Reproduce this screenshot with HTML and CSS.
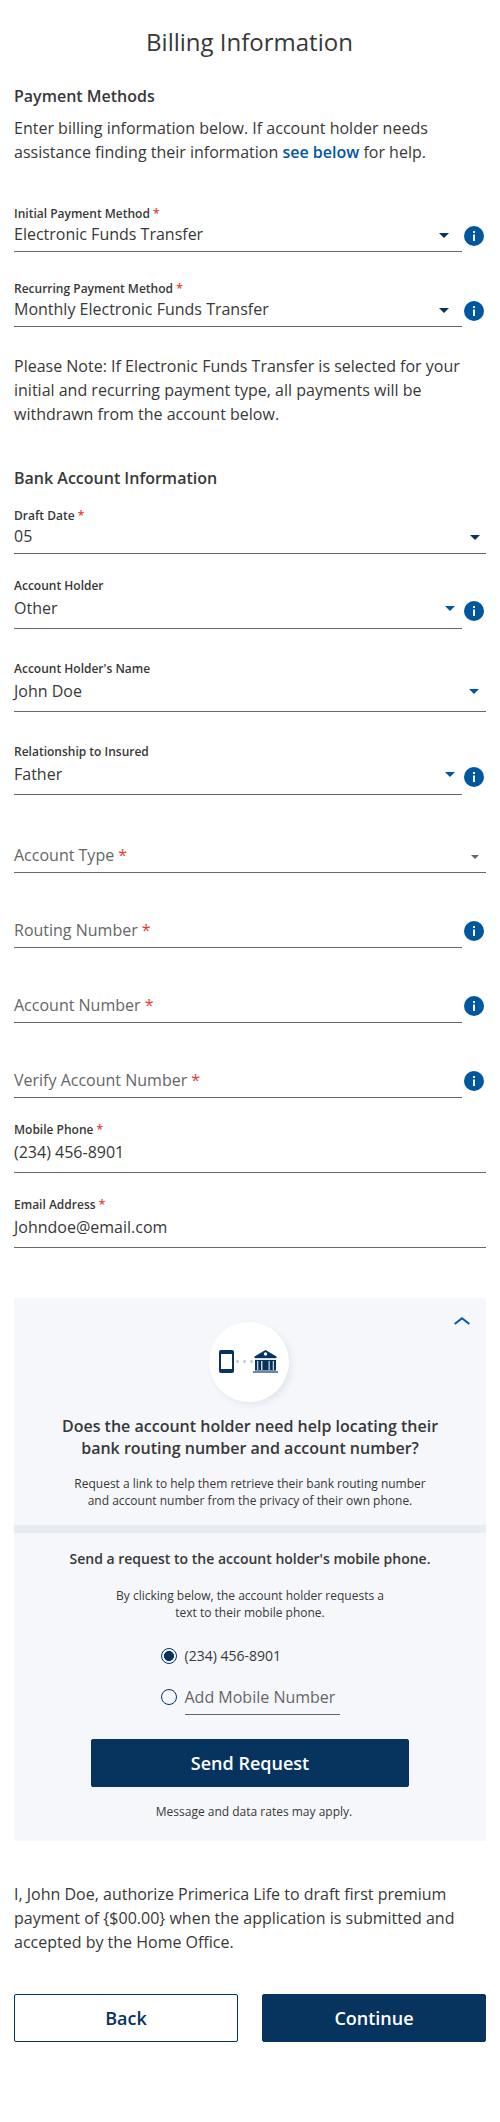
FILE: index.html
```html
<!DOCTYPE html>
<html lang="en">
<head>
<meta charset="utf-8">
<title>Billing Information</title>
<link rel="stylesheet" href="styles.css">
</head>
<body>
<svg class="defs" width="0" height="0">
  <symbol id="info" viewBox="0 0 20 20"><circle cx="10" cy="10" r="10" fill="#0057a0"/><path fill="#fff" d="M9 5h2v2H9zM9 8.5h2V15H9z"/></symbol>
  <symbol id="caret" viewBox="0 0 10 5"><path fill="currentColor" d="M0 0h10L5 5z"/></symbol>
</svg>
<main class="page">
  <h1 class="title">Billing Information</h1>
  <h2 class="section">Payment Methods</h2>
  <p class="copy intro">Enter billing information below. If account holder needs assistance finding their information <a class="link">see below</a> for help.</p>

  <div class="row first">
    <div class="field"><span class="label">Initial Payment Method <b class="req">*</b></span>
      <div class="value">Electronic Funds Transfer<svg class="caret navy inset"><use href="#caret"/></svg></div></div>
    <svg class="info"><use href="#info"/></svg>
  </div>
  <div class="row second">
    <div class="field"><span class="label">Recurring Payment Method <b class="req">*</b></span>
      <div class="value">Monthly Electronic Funds Transfer<svg class="caret navy inset"><use href="#caret"/></svg></div></div>
    <svg class="info"><use href="#info"/></svg>
  </div>
  <p class="copy note">Please Note: If Electronic Funds Transfer is selected for your initial and recurring payment type, all payments will be withdrawn from the account below.</p>

  <h2 class="section bank">Bank Account Information</h2>
  <div class="row draft">
    <div class="field"><span class="label">Draft Date <b class="req">*</b></span>
      <div class="value">05<svg class="caret navy"><use href="#caret"/></svg></div></div>
  </div>
  <div class="row near">
    <div class="field roomy"><span class="label">Account Holder</span>
      <div class="value">Other<svg class="caret"><use href="#caret"/></svg></div></div>
    <svg class="info low"><use href="#info"/></svg>
  </div>
  <div class="row apart">
    <div class="field roomy"><span class="label">Account Holder's Name</span>
      <div class="value">John Doe<svg class="caret"><use href="#caret"/></svg></div></div>
  </div>
  <div class="row apart">
    <div class="field roomy"><span class="label">Relationship to Insured</span>
      <div class="value">Father<svg class="caret"><use href="#caret"/></svg></div></div>
    <svg class="info low"><use href="#info"/></svg>
  </div>
  <div class="row type">
    <div class="field"><div class="value empty">Account Type&nbsp;<b class="req">*</b><svg class="caret small"><use href="#caret"/></svg></div></div>
  </div>
  <div class="row number">
    <div class="field"><div class="value empty">Routing Number&nbsp;<b class="req">*</b></div></div>
    <svg class="info"><use href="#info"/></svg>
  </div>
  <div class="row number">
    <div class="field"><div class="value empty">Account Number&nbsp;<b class="req">*</b></div></div>
    <svg class="info"><use href="#info"/></svg>
  </div>
  <div class="row number">
    <div class="field"><div class="value empty">Verify Account Number&nbsp;<b class="req">*</b></div></div>
    <svg class="info"><use href="#info"/></svg>
  </div>
  <div class="row near">
    <div class="field roomy"><span class="label">Mobile Phone <b class="req">*</b></span><div class="value">(234) 456-8901</div></div>
  </div>
  <div class="row near">
    <div class="field roomy"><span class="label">Email Address <b class="req">*</b></span><div class="value">Johndoe@email.com</div></div>
  </div>

  <section class="panel">
    <svg class="chevron" viewBox="0 0 16 8"><path d="M.7 7 8 1.3 15.3 7" fill="none" stroke="#0057a0" stroke-width="2"/></svg>
    <div class="badge">
      <svg width="60" height="24" viewBox="0 0 60 24">
        <rect x="1" width="15" height="23" rx="2" fill="#06345f"/><path d="M3 4h11v15H3z" fill="#fff"/>
        <g fill="#b3cbe0"><circle cx="19.5" cy="11.5" r="1.4"/><circle cx="26.5" cy="11.5" r="1.4"/><circle cx="33.5" cy="11.5" r="1.4"/></g>
        <path fill="#06345f" d="M47.500 0 58.500 6.500V8h-22V6.500zM37 10h21v10H37z"/>
        <path fill="#8093ad" d="M37 20h21v1H37z"/>
        <path fill="#d5dde7" d="M37 8h21v1.500H37z"/>
        <path fill="#6f87a3" d="M35 21h25v2H35z"/>
        <circle cx="47.500" cy="4" r="1.700" fill="#fff"/>
        <path fill="#c5d0dc" d="M39 11h1.300v9H39zM43 11h1.500v9H43zM50.500 11h1.300v9h-1.300zM54.700 11H56v9h-1.300z"/>
      </svg>
    </div>
    <h3 class="question">Does the account holder need help locating their<br>bank routing number and account number?</h3>
    <p class="small">Request a link to help them retrieve their bank routing number<br>and account number from the privacy of their own phone.</p>
    <div class="divider"></div>
    <h4 class="send">Send a request to the account holder's mobile phone.</h4>
    <p class="small click">By clicking below, the account holder requests a<br>text to their mobile phone.</p>
    <div class="options">
      <div class="option"><i class="radio on"></i><span class="phone">(234) 456-8901</span></div>
      <div class="option"><i class="radio"></i><div class="field add"><div class="value empty">Add Mobile Number</div></div></div>
    </div>
    <button class="button request">Send Request</button>
    <p class="small rates">Message and data rates may apply.</p>
  </section>

  <p class="copy authorize">I, John Doe, authorize Primerica Life to draft first premium payment of {$00.00} when the application is submitted and accepted by the Home Office.</p>
  <div class="actions"><button class="button outline">Back</button><button class="button">Continue</button></div>
</main>
</body>
</html>
```
FILE: styles.css
```css
* { box-sizing: border-box; }
body { margin: 0; background: #fff; color: #383838; font: 16px/24px "Open Sans", sans-serif; }
h1, h2, h3, h4, p { margin: 0; }
svg { display: block; flex: none; }
.defs { position: absolute; }
.page { display: flex; flex-direction: column; width: 500px; height: 2122px; padding: 26px 14px 0; }
.title { font-size: 24px; line-height: 32px; font-weight: 400; text-align: center; padding-right: 1px; }
.section { margin-top: 26px; font-size: 16px; line-height: 24px; font-weight: 600; }
.bank { margin-top: 40px; }
.intro { margin-top: 8px; }
.link { color: #0057a0; font-weight: 600; }
.note { margin-top: 27px; }
.row { display: flex; align-items: flex-end; gap: 2px; }
.first { margin-top: 42px; }
.second { margin-top: 29px; }
.draft { margin-top: 18px; }
.near { margin-top: 24px; }
.apart { margin-top: 32px; }
.type { margin-top: 48px; }
.number { margin-top: 45px; }
.field { display: flex; flex-direction: column; flex: 1; padding-bottom: 5px; border-bottom: 1px solid #666; }
.roomy { gap: 2px; padding-bottom: 8px; }
.label { font-size: 12px; line-height: 16px; font-weight: 600; }
.req { color: #e53935; font-weight: 400; }
.label .req { font-weight: 600; }
.value { display: flex; align-items: flex-end; height: 24px; }
.empty { color: #666; }
.caret { width: 10px; height: 5px; margin: 0 6px 8px auto; color: #0057a0; }
.roomy .caret { margin: 0 7px 9px auto; }
.caret.navy { color: #06345f; }
.caret.inset { margin-right: 13px; }
.caret.small { width: 8px; height: 4px; margin-right: 7px; color: #666; }
.info { width: 20px; height: 20px; margin: 0 2px 6px 0; }
.info.low { margin-bottom: 8px; }
.number .info { margin-bottom: 7px; }
.panel { position: relative; display: flex; flex-direction: column; align-items: center; margin-top: 50px; padding: 24px 0 21px; background: #f5f7fb; text-align: center; }
.chevron { position: absolute; top: 19px; right: 16px; width: 16px; height: 8px; }
.badge { display: flex; align-items: center; justify-content: center; width: 80px; height: 80px; margin-right: 2px; padding-right: 2px; border-radius: 50%; background: #fff; box-shadow: 3px 3px 6px #e2e7ef; }
.question { margin-top: 13px; font-size: 16px; line-height: 22px; font-weight: 600; }
.small { margin-top: 16px; font-size: 12px; line-height: 17px; }
.divider { width: 100%; height: 8px; margin-top: 16px; background: #e7ecf3; }
.send { margin-top: 16px; font-size: 14px; line-height: 20px; font-weight: 600; }
.click { margin-top: 18px; }
.options { display: flex; flex-direction: column; gap: 19px; width: 179px; margin-top: 25px; }
.option { display: flex; gap: 8px; text-align: left; }
.radio { width: 16px; height: 16px; margin-top: 2px; border: 1px solid #06345f; border-radius: 50%; }
.option + .option .radio { margin-top: 4px; }
.radio.on { background: radial-gradient(circle, #06345f 4.700px, transparent 5.300px); }
.phone { font-size: 14px; line-height: 20px; }
.button { height: 48px; flex: 1; padding: 0; border: 1px solid #06345f; border-radius: 2px; background: #06345f; color: #fff; font: 600 18px/24px "Open Sans", sans-serif; }
.request { flex: none; width: 318px; margin-top: 24px; }
.rates { padding-left: 8px; }
.authorize { margin-top: 41px; }
.actions { display: flex; gap: 24px; margin-top: 40px; }
.outline { background: #fff; color: #06345f; }
```
